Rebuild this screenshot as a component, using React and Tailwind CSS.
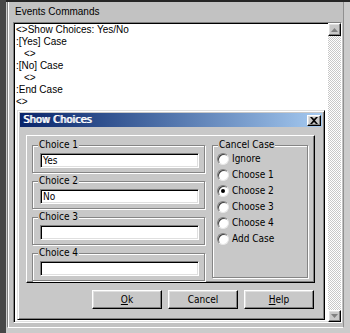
const sunken =
  'border border-t-[#808080] border-l-[#808080] border-b-white border-r-white shadow-[inset_1px_1px_0_#000000,inset_-1px_-1px_0_#dfdfdf]'
const raised =
  'border border-t-white border-l-white border-b-black border-r-black shadow-[inset_-1px_-1px_0_#808080,inset_1px_1px_0_#dfdfdf]'

const lines = [
  { text: '<>Show Choices: Yes/No', indent: false },
  { text: ':[Yes] Case', indent: false },
  { text: '<>', indent: true },
  { text: ':[No] Case', indent: false },
  { text: '<>', indent: true },
  { text: ':End Case', indent: false },
  { text: '<>', indent: false },
]

function Group({ label, className, legendClass, children }) {
  return (
    <fieldset
      className={`border border-[#858585] shadow-[inset_1px_1px_0_#ffffff,1px_1px_0_#ffffff] ${className}`}
    >
      <legend className={`px-[1px] leading-[12px] bg-[#c8c8c8] ${legendClass}`}>{label}</legend>
      {children}
    </fieldset>
  )
}

function ChoiceGroup({ label, value }) {
  return (
    <Group
      label={label}
      className="w-[173px] pl-[7px] pr-[5px] pt-[2px] pb-[4px]"
      legendClass="-ml-[2px]"
    >
      <div className={`h-[15px] bg-white pl-[2px] leading-[13px] ${sunken}`}>{value}</div>
    </Group>
  )
}

function Radio({ label, checked }) {
  return (
    <div className="flex items-center h-[16px]">
      <span className="w-[12px] h-[12px] rounded-full bg-white border border-t-[#808080] border-l-[#808080] border-r-[#e8e8e8] border-b-[#e8e8e8] shadow-[inset_1px_1px_0_#404040] flex items-center justify-center">
        {checked && <span className="w-[4px] h-[4px] rounded-full bg-black" />}
      </span>
      <span className="ml-[3px]">{label}</span>
    </div>
  )
}

function Button({ children }) {
  return (
    <button className={`w-[70px] h-[19px] bg-[#c8c8c8] text-[10px] leading-[12px] ${raised}`}>
      {children}
    </button>
  )
}

function Dialog() {
  return (
    <div className="absolute left-[17px] top-[110px] w-[308px] h-[210px] bg-[#c8c8c8] border border-t-[#dfdfdf] border-l-[#dfdfdf] border-b-black border-r-black shadow-[inset_1px_1px_0_#ffffff,inset_-1px_-1px_0_#808080] p-[2px] flex flex-col text-[10px] font-['Liberation_Sans_Narrow','DejaVu_Sans_Condensed','Liberation_Sans',sans-serif]">
      <div className="h-[14px] bg-gradient-to-r from-[#0a246a] to-[#a6caf0] flex items-center justify-between pl-[3px] pr-[1px]">
        <span className="text-white text-[11px] leading-[12px] [text-shadow:1px_0_0_#ffffff]">
          Show Choices
        </span>
        <span className={`w-[14px] h-[11px] bg-[#c8c8c8] flex items-center justify-center ${raised}`}>
          <svg width="8" height="7" viewBox="0 0 8 7">
            <path d="M0 0h2l2 2 2-2h2L5 3.5 8 7H6L4 5 2 7H0l3-3.5z" fill="#000" />
          </svg>
        </span>
      </div>
      <div className="ml-[6px] mt-[8px] w-[289px] h-[148px] border border-t-white border-l-white border-b-black border-r-black shadow-[inset_-1px_-1px_0_#808080] pl-[5px] pt-[3px] flex">
        <div className="flex flex-col gap-[2px]">
          <ChoiceGroup label="Choice 1" value="Yes" />
          <ChoiceGroup label="Choice 2" value="No" />
          <ChoiceGroup label="Choice 3" value="" />
          <ChoiceGroup label="Choice 4" value="" />
        </div>
        <Group
          label="Cancel Case"
          className="ml-[7px] w-[96px] h-[139px] pl-[4px]"
          legendClass="ml-[1px]"
        >
          <div>
            <Radio label="Ignore" />
            <Radio label="Choose 1" />
            <Radio label="Choose 2" checked />
            <Radio label="Choose 3" />
            <Radio label="Choose 4" />
            <Radio label="Add Case" />
          </div>
        </Group>
      </div>
      <div className="mt-[7px] ml-[72px] flex gap-[6px]">
        <Button>
          <span className="underline">O</span>k
        </Button>
        <Button>Cancel</Button>
        <Button>
          <span className="underline">H</span>elp
        </Button>
      </div>
    </div>
  )
}

export default function App() {
  return (
    <div className="relative w-[350px] h-[333px] overflow-hidden bg-[#cbcbcb] text-black text-[10px] leading-[12px] font-['Liberation_Sans',Arial,sans-serif] flex">
      <div className="w-[6px] h-full bg-[#474747] shrink-0" />
      <div className="flex-1 flex flex-col border-t-2 border-[#262626]">
        <div className="ml-[1px] w-[337px] h-[326px] bg-[#c2c2c2] border-l border-r border-b border-l-[#808080] border-r-[#909090] border-b-white shadow-[inset_1px_0_0_#ffffff] pl-[5px] flex flex-col">
          <div className="mt-[4px] ml-[2px] h-[12px]">Events Commands</div>
          <div className={`mt-[4px] w-[329px] h-[301px] bg-white flex ${sunken}`}>
            <div className="flex-1 pl-[2px] pt-[1px]">
              {lines.map((l, i) => (
                <div key={i} className={`h-[12px] ${l.indent ? 'pl-[8px]' : ''}`}>
                  {l.text}
                </div>
              ))}
            </div>
            <div className="w-[13px] h-full flex flex-col bg-[repeating-conic-gradient(#c8c8c8_0%_25%,#ffffff_0%_50%)] bg-[length:2px_2px]">
              <div className={`h-[13px] bg-[#c8c8c8] flex items-center justify-center ${raised}`}>
                <svg width="7" height="4" viewBox="0 0 7 4">
                  <path d="M3.5 0L7 4H0z" fill="#808080" />
                </svg>
              </div>
              <div className="flex-1" />
              <div className={`h-[12px] bg-[#c8c8c8] flex items-center justify-center ${raised}`}>
                <svg width="7" height="4" viewBox="0 0 7 4">
                  <path d="M0 0h7L3.5 4z" fill="#808080" />
                </svg>
              </div>
            </div>
          </div>
        </div>
      </div>
      <Dialog />
    </div>
  )
}
